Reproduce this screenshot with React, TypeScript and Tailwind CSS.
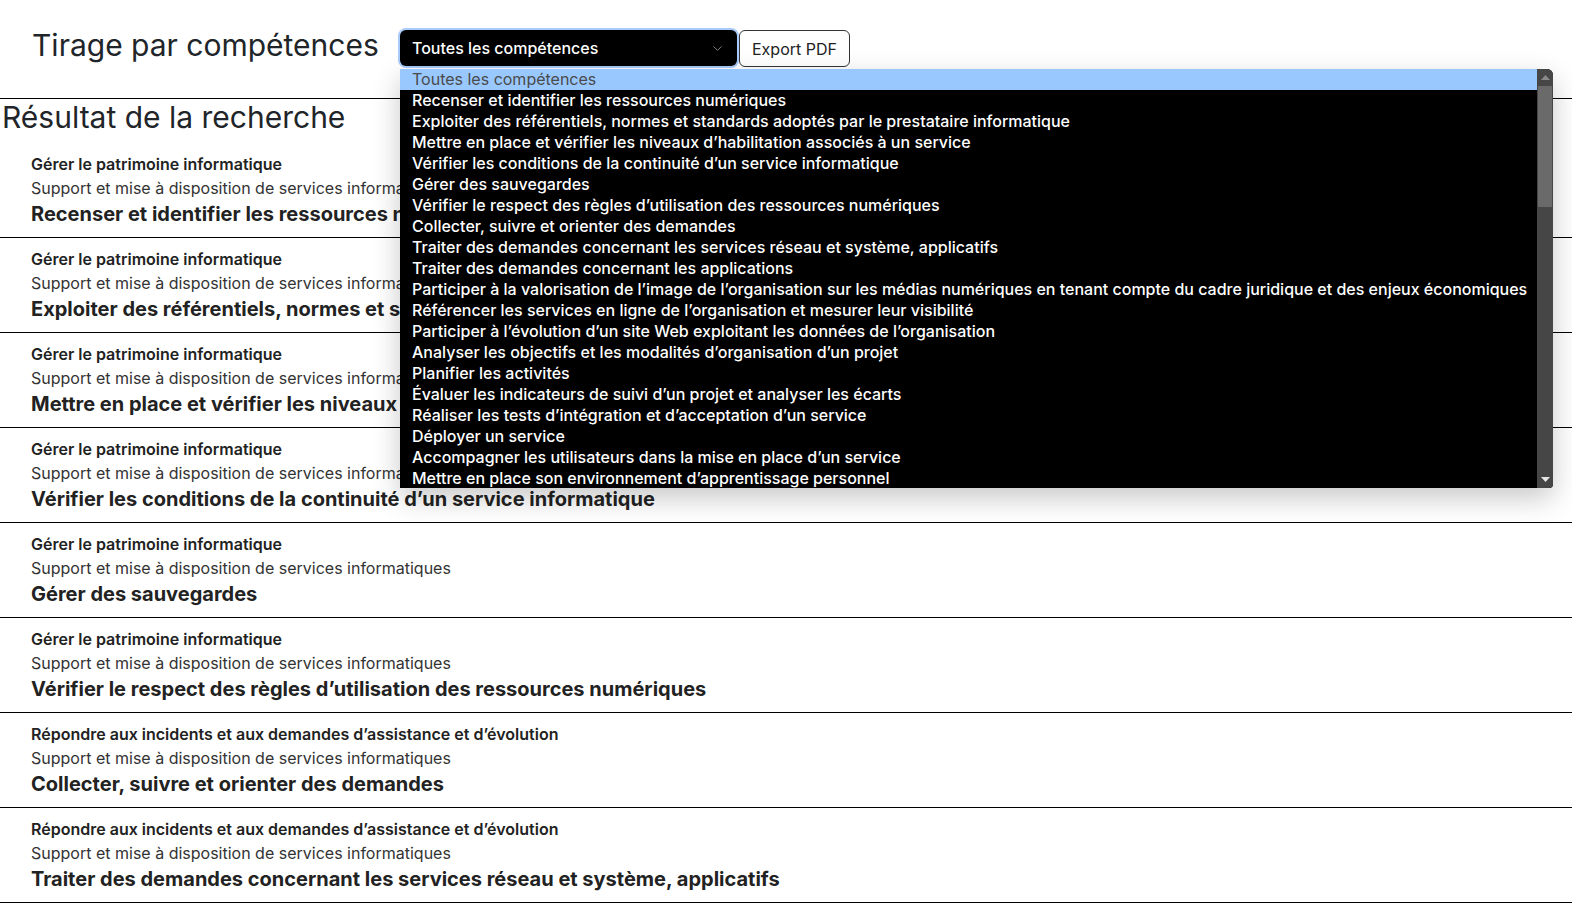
import {ChevronDown} from 'lucide-react';

type Result = {
  activity: string;
  block: string;
  skill: string;
};

const PATRIMOINE = 'Gérer le patrimoine informatique';
const INCIDENTS = 'Répondre aux incidents et aux demandes d’assistance et d’évolution';
const SUPPORT = 'Support et mise à disposition de services informatiques';

const results: Result[] = [
  {activity: PATRIMOINE, block: SUPPORT, skill: 'Recenser et identifier les ressources numériques'},
  {activity: PATRIMOINE, block: SUPPORT, skill: 'Exploiter des référentiels, normes et standards adoptés par le prestataire informatique'},
  {activity: PATRIMOINE, block: SUPPORT, skill: 'Mettre en place et vérifier les niveaux d’habilitation associés à un service'},
  {activity: PATRIMOINE, block: SUPPORT, skill: 'Vérifier les conditions de la continuité d’un service informatique'},
  {activity: PATRIMOINE, block: SUPPORT, skill: 'Gérer des sauvegardes'},
  {activity: PATRIMOINE, block: SUPPORT, skill: 'Vérifier le respect des règles d’utilisation des ressources numériques'},
  {activity: INCIDENTS, block: SUPPORT, skill: 'Collecter, suivre et orienter des demandes'},
  {activity: INCIDENTS, block: SUPPORT, skill: 'Traiter des demandes concernant les services réseau et système, applicatifs'},
];

const options = [
  'Recenser et identifier les ressources numériques',
  'Exploiter des référentiels, normes et standards adoptés par le prestataire informatique',
  'Mettre en place et vérifier les niveaux d’habilitation associés à un service',
  'Vérifier les conditions de la continuité d’un service informatique',
  'Gérer des sauvegardes',
  'Vérifier le respect des règles d’utilisation des ressources numériques',
  'Collecter, suivre et orienter des demandes',
  'Traiter des demandes concernant les services réseau et système, applicatifs',
  'Traiter des demandes concernant les applications',
  'Participer à la valorisation de l’image de l’organisation sur les médias numériques en tenant compte du cadre juridique et des enjeux économiques',
  'Référencer les services en ligne de l’organisation et mesurer leur visibilité',
  'Participer à l’évolution d’un site Web exploitant les données de l’organisation',
  'Analyser les objectifs et les modalités d’organisation d’un projet',
  'Planifier les activités',
  'Évaluer les indicateurs de suivi d’un projet et analyser les écarts',
  'Réaliser les tests d’intégration et d’acceptation d’un service',
  'Déployer un service',
  'Accompagner les utilisateurs dans la mise en place d’un service',
  'Mettre en place son environnement d’apprentissage personnel',
];

function OptionList() {
  return (
    <div className="absolute left-[400px] top-[69px] w-[1153px] h-[419px] bg-black rounded-tr-[6px] rounded-br-[4px] shadow-[0_10px_28px_rgba(0,0,0,0.22)] flex overflow-hidden z-10">
      <div className="flex-1 flex flex-col">
        <div className="h-[21px] leading-[21px] pl-3 bg-[#99c8ff] text-[#4a4a4a] text-[16px]">Toutes les compétences</div>
        {options.map((opt) => (
          <div key={opt} className="h-[21px] leading-[21px] pl-3 text-white text-[16px] font-medium whitespace-nowrap">
            {opt}
          </div>
        ))}
      </div>
      <div className="w-4 bg-[#464646] flex flex-col items-center">
        <div className="h-[17px] flex items-center justify-center">
          <svg width="9" height="5" viewBox="0 0 9 5"><path d="M0 5 L4.5 0 L9 5 Z" fill="#8a8a8a" /></svg>
        </div>
        <div className="w-[14px] h-[121px] bg-[#6a6a6a]" />
        <div className="flex-1" />
        <div className="h-[17px] flex items-center justify-center">
          <svg width="9" height="5" viewBox="0 0 9 5"><path d="M0 0 L9 0 L4.5 5 Z" fill="#e6e6e6" /></svg>
        </div>
      </div>
    </div>
  );
}

export default function App() {
  return (
    <div className="relative min-h-[916px] bg-white text-[#212529]" style={{fontFamily: 'Inter, "Noto Sans", sans-serif'}}>
      <div className="h-[99px] border-b border-black flex items-start pl-8 pt-[28px]">
        <h1 className="w-[366px] text-[30px] leading-[36px] font-normal mt-[-1px] whitespace-nowrap">Tirage par compétences</h1>
        <div className="rounded-[8px] p-[2px] bg-[#a9cbfa]">
          <div className="w-[337px] h-[36px] bg-black text-white rounded-[6px] flex items-center justify-between pl-3 pr-3 text-[16px] font-medium">
            <span>Toutes les compétences</span>
            <ChevronDown size={15} className="text-[#8a8a8a]" strokeWidth={1.5} />
          </div>
        </div>
        <button type="button" className="h-[37px] mt-[2px] px-3 border border-[#333] rounded-[6px] bg-white text-[16px] text-[#222]">
          Export PDF
        </button>
      </div>

      <h2 className="text-[30px] leading-[36px] pb-2 pl-[2px] font-normal">Résultat de la recherche</h2>

      <div>
        {results.map((r, i) => (
          <div key={i} className="border-b border-black pl-[31px] pt-[9px] pb-[9px]">
            <div className="text-[16px] leading-6 font-semibold text-[#222]">{r.activity}</div>
            <div className="text-[16px] leading-6 text-[#333]">{r.block}</div>
            <div className="text-[20px] leading-[28px] font-bold text-[#222]">{r.skill}</div>
          </div>
        ))}
      </div>

      <OptionList />
    </div>
  );
}
